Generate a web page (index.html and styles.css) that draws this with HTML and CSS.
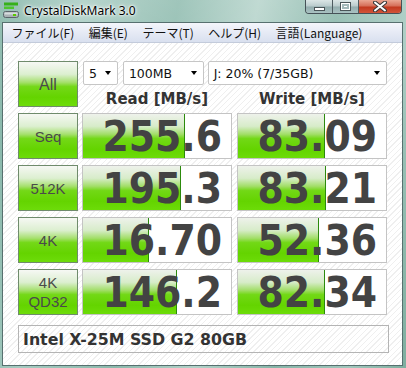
FILE: index.html
```html
<!DOCTYPE html>
<html lang="ja">
<head>
    <meta charset="utf-8">
    <title>CrystalDiskMark 3.0</title>
    <link rel="stylesheet" href="styles.css">
</head>
<body>
<div class="window">
    <div class="titlebar">
        <svg class="app-icon" width="16" height="16" viewBox="0 0 16 16">
            <rect x="1" y="0.5" width="14" height="3" fill="#36b01a"/>
            <rect x="1" y="4.5" width="10" height="2.5" fill="#4cc62c"/>
            <rect x="0.5" y="9.5" width="15" height="6" rx="2" fill="#a9b1b4" stroke="#59646a"/>
            <rect x="1.5" y="10.5" width="13" height="2" fill="#d6dcde"/>
            <rect x="10" y="12" width="3" height="2" fill="#58c800"/>
        </svg>
        <span class="title">CrystalDiskMark 3.0</span>
        <div class="caption-buttons">
            <span class="cap min"><i></i></span>
            <span class="cap max"><i></i></span>
            <span class="cap close">
                <svg width="14" height="11" viewBox="0 0 14 11">
                    <path d="M2 1.5 L12 9.5 M12 1.5 L2 9.5" stroke="#3a3a3a" stroke-width="4" stroke-linecap="round"/>
                    <path d="M2 1.5 L12 9.5 M12 1.5 L2 9.5" stroke="#fff" stroke-width="2" stroke-linecap="round"/>
                </svg>
            </span>
        </div>
    </div>
    <div class="client">
        <div class="menubar">
            <span class="menu-item">ファイル(F)</span>
            <span class="menu-item">編集(E)</span>
            <span class="menu-item">テーマ(T)</span>
            <span class="menu-item">ヘルプ(H)</span>
            <span class="menu-item">言語(Language)</span>
        </div>
        <div class="content">
            <div class="bench">
                <div class="btn all">All</div>
                <div class="selects">
                    <div class="select count">5 <span class="arrow"></span></div>
                    <div class="select size">100MB <span class="arrow"></span></div>
                    <div class="select drive">J: 20% (7/35GB) <span class="arrow"></span></div>
                </div>
                <div class="head">Read [MB/s]</div>
                <div class="head write">Write [MB/s]</div>

                <div class="btn">Seq</div>
                <div class="val" style="--fill: 101px">255.6</div>
                <div class="val write" style="--fill: 86px">83.09</div>

                <div class="btn">512K</div>
                <div class="val" style="--fill: 97px">195.3</div>
                <div class="val write" style="--fill: 87px">83.21</div>

                <div class="btn">4K</div>
                <div class="val" style="--fill: 65px">16.70</div>
                <div class="val write" style="--fill: 80px">52.36</div>

                <div class="btn">4K<br>QD32</div>
                <div class="val" style="--fill: 93px">146.2</div>
                <div class="val write" style="--fill: 86px">82.34</div>
            </div>
            <div class="model">Intel X-25M SSD G2 80GB</div>
        </div>
    </div>
</div>
</body>
</html>
```

FILE: styles.css
```css
* {
    box-sizing: border-box;
}

html,
body {
    margin: 0;
    padding: 0;
}

body {
    width: 406px;
    height: 368px;
    overflow: hidden;
}

.window {
    width: 406px;
    height: 368px;
    display: flex;
    flex-direction: column;
    background:
        linear-gradient(180deg, rgba(255, 255, 255, 0.18), rgba(255, 255, 255, 0) 40%),
        linear-gradient(100deg, #7eb1a3 0%, #a6cbc1 18%, #8bb9ac 38%, #b3d2c9 55%, #86b5a8 72%, #a2c7bd 88%, #7eae9f 100%);
}

/* title bar */

.titlebar {
    height: 22px;
    display: flex;
    align-items: flex-start;
    flex-shrink: 0;
}

.app-icon {
    margin: 2px 0 0 3px;
    flex-shrink: 0;
}

.title {
    margin-left: 5px;
    line-height: 21px;
    font-family: "Noto Sans", "DejaVu Sans", sans-serif;
    font-size: 12px;
    color: #000;
    text-shadow: 0 0 6px #fff, 0 0 3px #fff, 0 0 2px #fff;
}

.caption-buttons {
    margin-left: auto;
    margin-right: 4px;
    display: flex;
    height: 14px;
    border: 1px solid #465258;
    border-top: none;
    border-radius: 0 0 4px 4px;
    overflow: hidden;
}

.cap {
    height: 13px;
    display: flex;
    align-items: center;
    justify-content: center;
    border-left: 1px solid #4d5b60;
}

.cap.min,
.cap.max {
    width: 26px;
    background: linear-gradient(#dbe6e6 0%, #b9cbcc 48%, #93adae 52%, #a9c2c2 100%);
}

.cap.min {
    border-left: none;
}

.cap.min i {
    width: 11px;
    height: 4px;
    margin-top: 5px;
    background: #fff;
    border: 1px solid #4a5558;
}

.cap.max i {
    width: 11px;
    height: 9px;
    border: 1px solid #4a5558;
    background: #fff;
    box-shadow: inset 0 0 0 1px #fff, inset 0 0 0 3px #a3b9ba;
}

.cap.close {
    width: 43px;
    background: linear-gradient(#eaa793 0%, #d6705a 45%, #c2391f 55%, #d2553a 100%);
}

/* client area */

.client {
    flex: 1;
    margin: 0 3px 2px 2px;
    border: 1px solid #57706f;
    display: flex;
    flex-direction: column;
    background-color: #fff;
}

.menubar {
    height: 20px;
    display: flex;
    align-items: center;
    padding-left: 1px;
    background: linear-gradient(#f4f6fb, #e6eaf5 50%, #d9e0ef);
    border-bottom: 1px solid #c3cbdb;
    font-family: "Noto Sans CJK JP", "Noto Sans", sans-serif;
    font-size: 12px;
    color: #111;
}

.menu-item {
    padding: 0 7px 0 7.5px;
    line-height: 18px;
}

.content {
    flex: 1;
    padding: 18px 0 0 15px;
    background:
        repeating-linear-gradient(135deg, #fff 0 3px, #efefef 3px 4px);
}

.bench {
    display: grid;
    grid-template-columns: 60px 150px 151px;
    grid-template-rows: 24px 16px repeat(4, 46px);
    column-gap: 4px;
    row-gap: 6px;
}

/* buttons */

.btn {
    border: 1px solid #6f8b6c;
    background: linear-gradient(#f6f8f4 0%, #dcefd0 28%, #a6e06e 46%, #74d818 56%, #64d400 80%, #6ddc0a 100%);
    display: flex;
    align-items: center;
    justify-content: center;
    text-align: center;
    font-family: "Liberation Sans", Arial, sans-serif;
    font-size: 15px;
    line-height: 19px;
    color: #4a4a4a;
}

.btn.all {
    grid-row: 1 / 3;
    font-size: 16px;
}

/* selects */

.selects {
    grid-column: 2 / 4;
    display: flex;
    margin-left: 1px;
}

.select {
    height: 24px;
    display: flex;
    align-items: center;
    justify-content: space-between;
    padding: 0 6px 0 5px;
    background: #fff;
    border: 1px solid #c6c6c6;
    border-radius: 2px;
    font-family: "DejaVu Sans", sans-serif;
    font-size: 12.5px;
    color: #111;
}

.select.count {
    width: 35px;
    margin-right: 5px;
}

.select.size {
    width: 81px;
    margin-right: 4px;
}

.select.drive {
    width: 180px;
}

.arrow {
    width: 0;
    height: 0;
    border-left: 3.5px solid transparent;
    border-right: 3.5px solid transparent;
    border-top: 4px solid #000;
}

/* headings */

.head {
    grid-column: 2;
    text-align: center;
    font-family: "DejaVu Sans", sans-serif;
    font-weight: bold;
    font-size: 15px;
    line-height: 16px;
    color: #333;
}

.head.write,
.val.write {
    grid-column: 3;
    width: 150px;
    justify-self: end;
}

/* values */

.val {
    border: 1px solid #c4c4c4;
    display: flex;
    align-items: center;
    justify-content: flex-end;
    padding: 2px 9px 0 0;
    font-family: "DejaVu Sans Condensed", "DejaVu Sans", sans-serif;
    font-stretch: condensed;
    font-weight: bold;
    font-size: 42px;
    line-height: 1;
    color: #434343;
    background:
        linear-gradient(#2c8a0c, #2c8a0c) var(--fill) 0 / 1px 100% no-repeat,
        linear-gradient(#eef2eb 0%, #d7ecc9 28%, #a2de68 46%, #72d816 56%, #64d400 80%, #6cdc08 100%) 0 0 / var(--fill) 100% no-repeat,
        #fff;
}

/* drive name */

.model {
    width: 371px;
    height: 28px;
    margin-top: 10px;
    border: 1px solid #b4b4b4;
    padding-left: 4px;
    display: flex;
    align-items: center;
    font-family: "DejaVu Sans", sans-serif;
    font-weight: bold;
    font-size: 15.8px;
    color: #333;
}
```
